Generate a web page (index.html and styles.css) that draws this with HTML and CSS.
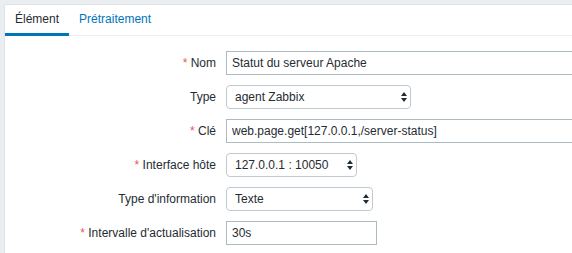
FILE: index.html
```html
<!DOCTYPE html>
<html lang="fr">
<head>
<meta charset="utf-8">
<title>Élément</title>
<link rel="stylesheet" href="styles.css">
</head>
<body>
<div class="panel">
  <ul class="tabs">
    <li class="tab active">Élément</li>
    <li class="tab"><a class="tab-link">Prétraitement</a></li>
  </ul>
  <form class="form">
    <label class="label"><span class="req">*</span> Nom</label>
    <div class="field"><input class="text w-wide" type="text" value="Statut du serveur Apache"></div>

    <label class="label">Type</label>
    <div class="field">
      <div class="select w-type"><span>agent Zabbix</span>
        <svg class="arrows" width="6" height="10" viewBox="0 0 6 10"><path d="M3 0L6 4H0Z M3 10L0 6H6Z" fill="#1f2c33"/></svg>
      </div>
    </div>

    <label class="label"><span class="req">*</span> Clé</label>
    <div class="field"><input class="text w-wide" type="text" value="web.page.get[127.0.0.1,/server-status]"></div>

    <label class="label"><span class="req">*</span> Interface hôte</label>
    <div class="field">
      <div class="select w-iface"><span>127.0.0.1 : 10050</span>
        <svg class="arrows" width="6" height="10" viewBox="0 0 6 10"><path d="M3 0L6 4H0Z M3 10L0 6H6Z" fill="#1f2c33"/></svg>
      </div>
    </div>

    <label class="label">Type d'information</label>
    <div class="field">
      <div class="select w-info"><span>Texte</span>
        <svg class="arrows" width="6" height="10" viewBox="0 0 6 10"><path d="M3 0L6 4H0Z M3 10L0 6H6Z" fill="#1f2c33"/></svg>
      </div>
    </div>

    <label class="label"><span class="req">*</span> Intervalle d'actualisation</label>
    <div class="field"><input class="text w-small" type="text" value="30s"></div>
  </form>
</div>
</body>
</html>
```
FILE: styles.css
```css
html, body {
  margin: 0;
  height: 100%;
  overflow: hidden;
}
body {
  box-sizing: border-box;
  padding: 4px 0 0 4px;
  background: #ebeef0;
  font: 12px "Liberation Sans", Arial, sans-serif;
  color: #1f2c33;
}
.panel {
  box-sizing: border-box;
  height: 100%;
  background: #fff;
  border-top: 1px solid #dfe4e7;
  border-left: 1px solid #dfe4e7;
  overflow: hidden;
}
.tabs {
  display: flex;
  margin: 0;
  padding: 0;
  list-style: none;
  height: 30px;
  border-bottom: 1px solid #ebeef0;
}
.tab {
  box-sizing: border-box;
  height: 31px;
  padding: 0 10px;
  line-height: 28px;
}
.tab.active {
  border-bottom: 3px solid #0275b8;
}
.tab-link {
  color: #0275b8;
  text-decoration: none;
}
.form {
  display: grid;
  grid-template-columns: 211px minmax(0, 1fr);
  column-gap: 10px;
  row-gap: 10px;
  margin: 0;
  padding-top: 15px;
}
.label {
  align-self: center;
  text-align: right;
  white-space: nowrap;
}
.req {
  color: #e45959;
}
.field {
  display: flex;
  min-width: 0;
  overflow: hidden;
}
.text {
  box-sizing: border-box;
  flex: none;
  height: 24px;
  margin: 0;
  padding: 0 5px;
  border: 1px solid #acbbc2;
  border-radius: 0;
  font: inherit;
  color: #1f2c33;
  background: #fff;
  outline: none;
}
.w-wide { width: 453px; }
.w-small { width: 151px; }
.select {
  box-sizing: border-box;
  display: flex;
  align-items: center;
  justify-content: space-between;
  height: 24px;
  padding: 0 3px 0 8px;
  border: 1px solid #bfcbd0;
  border-radius: 4px;
  background: #fff;
}
.arrows {
  display: block;
  flex: none;
}
.w-type { width: 185px; }
.w-iface { width: 131px; }
.w-info { width: 147px; }
```
